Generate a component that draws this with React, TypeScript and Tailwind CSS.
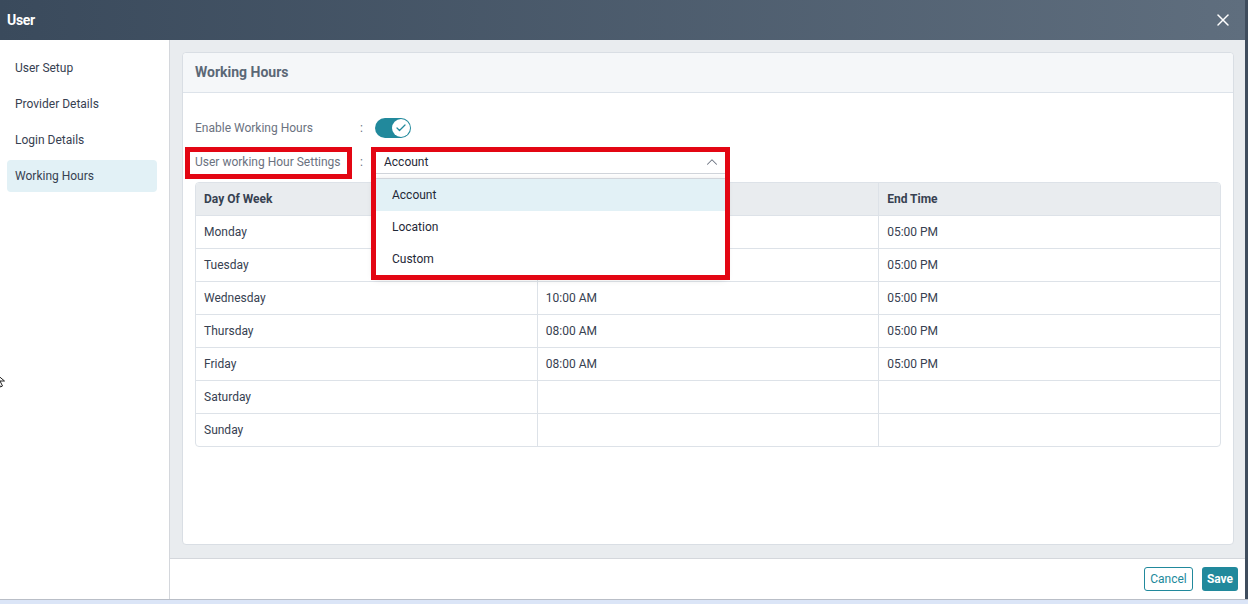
import React from "react";
import { X, Check, ChevronUp } from "lucide-react";

type Row = { day: string; start: string; end: string };

const ROWS: Row[] = [
  { day: "Monday", start: "08:00 AM", end: "05:00 PM" },
  { day: "Tuesday", start: "08:00 AM", end: "05:00 PM" },
  { day: "Wednesday", start: "10:00 AM", end: "05:00 PM" },
  { day: "Thursday", start: "08:00 AM", end: "05:00 PM" },
  { day: "Friday", start: "08:00 AM", end: "05:00 PM" },
  { day: "Saturday", start: "", end: "" },
  { day: "Sunday", start: "", end: "" },
];

const NAV = ["User Setup", "Provider Details", "Login Details", "Working Hours"];
const OPTIONS = ["Account", "Location", "Custom"];

export default function App() {
  return (
    <div
      className="relative w-[1248px] h-[604px] overflow-hidden bg-[#3f4d5d] flex flex-col text-[12px] text-[#374151]"
      style={{ fontFamily: "Roboto, 'Liberation Sans', sans-serif" }}
    >
      <div className="flex flex-col w-[1245px] h-[599px] bg-white">
        {/* title bar */}
        <div className="h-[40px] flex items-center justify-between pl-[7px] pr-[12px] bg-gradient-to-r from-[#3a4a5c] to-[#5f6e7e]">
          <span className="text-white font-bold text-[14px] tracking-[-0.3px]">User</span>
          <X className="w-[20px] h-[20px] text-white" strokeWidth={1.8} />
        </div>

        <div className="flex flex-1 min-h-0">
          {/* sidebar */}
          <div className="w-[170px] shrink-0 border-r border-[#d4d7dc] pt-[12px] pl-[7px] pr-[12px] flex flex-col gap-[4px]">
            {NAV.map((n) => (
              <div
                key={n}
                className={
                  n === "Working Hours"
                    ? "h-[32px] flex items-center px-[8px] rounded-[4px] bg-[#e2f1f6]"
                    : "h-[32px] flex items-center px-[8px]"
                }
              >
                {n}
              </div>
            ))}
          </div>

          {/* main */}
          <div className="flex-1 flex flex-col">
            <div className="flex-1 bg-[#e9ecef] pt-[12px] pl-[12px] pr-[11px] pb-[13px] flex">
              <div className="relative flex-1 flex flex-col bg-white border border-[#d9dee4] rounded-[4px]">
                <div className="h-[40px] shrink-0 flex items-center px-[12px] bg-[#f5f7f9] border-b border-[#dde3ea] rounded-t-[4px]">
                  <span className="font-bold text-[14px] text-[#5b6876]">Working Hours</span>
                </div>

                <div className="relative flex-1 px-[12px] pt-[23px]">
                  <div className="flex items-center h-[24px]">
                    <div className="w-[163px] text-[#6b7280]">Enable Working Hours</div>
                    <div className="w-[17px] pl-[2px] text-[#6b7280]">:</div>
                    <div className="w-[36px] h-[20px] rounded-full bg-[#21899c] flex items-center justify-end pr-[1px]">
                      <div className="w-[18px] h-[18px] rounded-full bg-white flex items-center justify-center">
                        <Check className="w-[12px] h-[12px] text-[#21899c]" strokeWidth={2.5} />
                      </div>
                    </div>
                  </div>

                  <div className="flex items-center h-[24px] mt-[10px]">
                    <div className="w-[163px] text-[#6b7280]">User working Hour Settings</div>
                    <div className="w-[17px] pl-[2px] text-[#6b7280]">:</div>
                    <div className="w-[350px] h-[24px] flex items-center justify-between pl-[9px] pr-[4px] border-b border-[#d1d5db]">
                      <span className="text-[#1f2937]">Account</span>
                      <ChevronUp className="w-[18px] h-[18px] text-[#6b7280]" strokeWidth={1.4} />
                    </div>
                  </div>

                  {/* table */}
                  <div className="mt-[8px] border border-[#dde2e8] rounded-[4px] overflow-hidden">
                    <table className="w-full table-fixed border-collapse">
                      <thead>
                        <tr className="h-[32px] bg-[#e9ecef]">
                          <th className="text-left font-bold pl-[8px]">Day Of Week</th>
                          <th className="text-left font-bold pl-[8px] border-l border-[#dde2e8]">Start Time</th>
                          <th className="text-left font-bold pl-[8px] border-l border-[#dde2e8]">End Time</th>
                        </tr>
                      </thead>
                      <tbody>
                        {ROWS.map((r) => (
                          <tr key={r.day} className="h-[33px] border-t border-[#dde2e8]">
                            <td className="pl-[8px]">{r.day}</td>
                            <td className="pl-[8px] border-l border-[#dde2e8]">{r.start}</td>
                            <td className="pl-[8px] border-l border-[#dde2e8]">{r.end}</td>
                          </tr>
                        ))}
                      </tbody>
                    </table>
                  </div>

                  {/* open dropdown */}
                  <div className="absolute left-[192px] top-[85px] w-[350px] bg-white shadow-[0_3px_8px_rgba(0,0,0,0.18)] border-t border-[#d1d5db]">
                    {OPTIONS.map((o) => (
                      <div
                        key={o}
                        className={
                          o === "Account"
                            ? "h-[32px] flex items-center pl-[17px] bg-[#e2f1f6] text-[#1f2937]"
                            : "h-[32px] flex items-center pl-[17px] text-[#1f2937]"
                        }
                      >
                        {o}
                      </div>
                    ))}
                  </div>

                  {/* red annotation boxes */}
                  <div className="absolute left-[2px] top-[54px] w-[167px] h-[32px] border-[5px] border-[#e30613]" />
                  <div className="absolute left-[188px] top-[54px] w-[359px] h-[133px] border-[5px] border-[#e30613]" />
                </div>
              </div>
            </div>

            <div className="h-[41px] shrink-0 border-t border-[#d4d7dc] flex items-center justify-end gap-[9px] pr-[7px]">
              <button className="h-[24px] w-[49px] rounded-[3px] border border-[#21899c] text-[#21899c] text-[12px] bg-white">
                Cancel
              </button>
              <button className="h-[24px] w-[36px] rounded-[3px] bg-[#21899c] text-white font-bold text-[12px]">
                Save
              </button>
            </div>
          </div>
        </div>
      </div>

      <div className="flex-1 border-t border-[#b9bec7] bg-[#dbe5f7]" />

      {/* mouse pointer at left edge */}
      <svg className="absolute left-[-6px] top-[372px]" width="14" height="16" viewBox="0 0 14 16">
        <path d="M1 1 L1 13 L4 10 L6.5 15 L8.5 14 L6 9 L10.5 9 Z" fill="white" stroke="#222" strokeWidth="1" />
      </svg>
    </div>
  );
}
